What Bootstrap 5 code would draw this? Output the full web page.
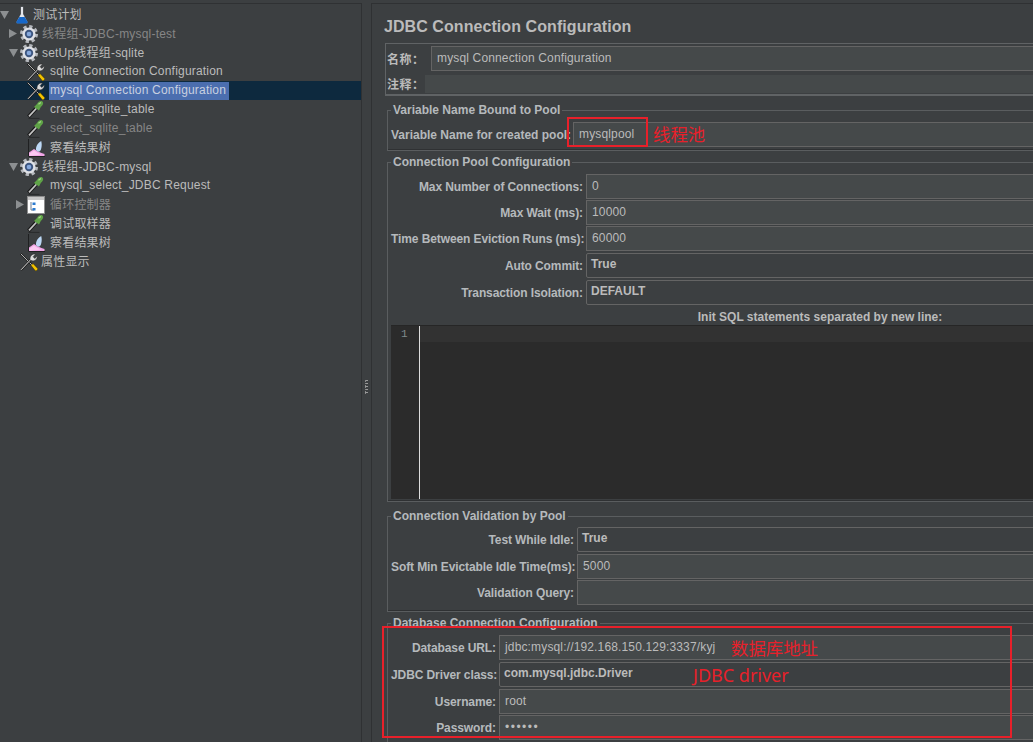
<!DOCTYPE html>
<html lang="zh">
<head>
<meta charset="utf-8">
<title>JDBC Connection Configuration</title>
<link href="https://cdn.jsdelivr.net/npm/bootstrap@5.3.0/dist/css/bootstrap.min.css" rel="stylesheet">
<style>
html,body{height:742px;overflow:hidden;}
body{background:#3c3f41;color:#bbb;font:12px/14px "Liberation Sans","Noto Sans CJK SC",sans-serif;position:relative;}
.shell{height:742px;padding-top:3px;}
.treepane{width:362px;flex:none;border-top:1px solid #2f3133;padding-top:1px;border-right:1px solid #2f3133;}
.tree-row{height:19px;white-space:nowrap;}
.lv0{padding-left:0;}.lv1{padding-left:9px;}.lv2{padding-left:16px;}
.tree-arrow{width:11px;flex:none;display:flex;justify-content:flex-start;}
.tree-icon{width:18px;height:18px;flex:none;margin:0 3px 0 0;}
.lv0 .tree-icon{width:16px;margin:0 2px 0 3px;}
.lv2 .tree-icon{margin-right:4px;}
.tree-label{padding:0 2px 0 1px;height:18px;line-height:18px;color:#bbb;letter-spacing:.2px;}
.tree-label.lat{line-height:16px;}
.tree-label.tight{margin-left:-1px;}
.dim .tree-label{color:#868686;}
.chosen{background:#0d293e;}
.chosen .tree-label{background:#4b6eaf;color:#c8d0e0;width:180px;}
.splitter{width:10px;flex:none;border-right:1px solid #2f3133;display:flex;align-items:center;justify-content:center;padding-top:29px;}
.grip{width:3px;height:14px;background:repeating-linear-gradient(#9a9a9a 0 1px,#3c3f41 1px 3px);border-left:1px dotted #888;}
.editpane{flex:1;min-width:0;overflow:hidden;border-top:1px solid #2f3133;padding:0 0 0 13px;}
.editinner{width:900px;}
.pagetitle{font-size:16px;font-weight:700;line-height:20px;margin:13px 0 6px -1px;color:#bbb;letter-spacing:.07px;}
.namebox{border:1px solid #606365;border-bottom-width:2px;border-right:0;height:53px;padding:2px 0 0 0;margin-right:-10px;}
.flabel{font-weight:700;font-family:"Noto Sans CJK SC",sans-serif;line-height:16px;}
.namebox .flabel{width:45px;padding-left:1px;flex:none;letter-spacing:.04em;}
.namebox .cmtlabel{width:39px;}
.fld{height:25px;background:#45494a;border:1px solid #646464;flex:1;padding:0 5px;line-height:23px;color:#bbb;min-width:0;letter-spacing:.15px;}
.fld.dots{letter-spacing:1.5px;}
.combo{height:25px;background:#3c3f41;border:1px solid #646464;border-radius:2px;flex:1;padding:0 4px;line-height:21px;font-weight:700;color:#bbb;}
.cmt{height:18px;background:#45494a;flex:1;}
fieldset.grp{border:1px solid #5a5d5f;border-right:0;margin:0 0 0 2px;padding:0 0 2px 3px;min-width:0;box-shadow:inset 0 -1px 0 #2f3133;}
legend.cap{float:none;width:auto;font-size:12px;line-height:14px;font-weight:700;margin:0;padding:0 2px;color:#b5b9bc;}
.frow{display:flex;gap:3px;align-items:center;margin-bottom:1px;}
.frow:has(.combo){margin-top:2px;margin-bottom:2px;}
.flbl{flex:none;text-align:right;font-weight:700;color:#b5b9bc;white-space:nowrap;letter-spacing:-.1px;}
.g1{margin-top:7px!important;padding-top:5px!important;}
.g2{margin-top:4px!important;padding-top:5px!important;padding-bottom:1px!important;}
.g3{margin-top:7px!important;padding-top:2px!important;padding-bottom:5px!important;}
.g4{margin-top:4px!important;padding-top:5px!important;}
.g1 .flbl{width:179px;letter-spacing:0;}
.g2 .flbl{width:192px;}
.g3 .flbl{width:183px;}
.g4 .flbl{width:105px;}
.sqlcap{text-align:center;font-weight:700;width:858px;line-height:14px;margin:5px 0 1px;}
.sqlbox{background:#2b2b2b;height:174px;display:flex;border-top:1px solid #262626;margin-bottom:1px;}
.gutter{width:29px;flex:none;color:#7f8a8d;font-family:"Liberation Mono",monospace;font-size:11px;padding:1px 0 0 10px;line-height:14px;background:#2b2b2b;border-right:1px solid #ddd;}
.sqlarea{flex:1;}
.curline{height:16px;background:#323232;}
.ann{position:absolute;border:2px solid #e8202a;pointer-events:none;}
.antext{position:absolute;color:#e8202a;font:17.4px/20px "Noto Sans","Noto Sans CJK SC",sans-serif;white-space:nowrap;}
.antext.wide{font-size:18px;}
</style>
</head>
<body>
<svg width="0" height="0" class="position-absolute">
<defs>
<symbol id="i-gear" viewBox="0 0 18 18">
<circle cx="9" cy="9" r="7.400" fill="none" stroke="#b4b7bc" stroke-width="3.200" stroke-dasharray="3.200 2.610"/>
<circle cx="9" cy="9" r="6.600" fill="#dfe1e6"/>
<circle cx="9" cy="9" r="4.200" fill="#3d5680"/>
<circle cx="9" cy="9" r="2.300" fill="#86a8dc"/>
</symbol>
<symbol id="i-flask" viewBox="0 0 16 18">
<path d="M6.500 .5h3v7.500l4 7.500c.5 1-.2 2-1.200 2H3.700c-1 0-1.700-1-1.200-2l4-7.500z" fill="#e4e7ec" stroke="#24272a" stroke-width=".6"/>
<path d="M5.400 11h5.200l2.900 4.500c.5 1-.2 2-1.200 2H3.700c-1 0-1.700-1-1.200-2z" fill="#1667c8"/>
</symbol>
<symbol id="i-tools" viewBox="0 0 18 18">
<path d="M.5 .5l12 12" stroke="#1c1c1c" stroke-width="1.800" fill="none"/>
<path d="M.8 .8l12 12" stroke="#dcdcdc" stroke-width=".8" fill="none"/>
<path d="M11 12.500l2-2 4.700 4.900c.6 1-1.400 3-2.400 2.400z" fill="#f2c200" stroke="#2f2800" stroke-width=".5"/>
<path d="M1 17l10-10.500" stroke="#1f1f1f" stroke-width="2.200" fill="none"/>
<path d="M1 16.800l10-10.500" stroke="#e6e6e6" stroke-width="1" fill="none"/>
<path d="M10.300 7.500c-1.100-2.800.8-6.300 3.800-6.600l1.400.1-2.300 2.700 1.500 1.700 2.500-2.300c.5 3.100-2.800 5.900-5.900 4.400z" fill="#dcdcdc" stroke="#2c2c2c" stroke-width=".6"/>
</symbol>
<symbol id="i-pipette" viewBox="0 0 18 18">
<path d="M1.500 17.500h11" stroke="#2a2c2d" stroke-width="1.200"/>
<path d="M1.500 15.800l8-8.800" stroke="#161616" stroke-width="3.600"/>
<path d="M2 15.400l7.500-8.200" stroke="#c4c4c4" stroke-width="1.700"/>
<path d="M7 6l3-3c1.200-2.200 3.700-3.700 5.400-2.500 1.600 1.200.5 3.800-1.500 5.300L12 9.500z" fill="#5fa347"/>
<path d="M11.500 3.200l2.400-1.800" stroke="#a7d68c" stroke-width="1.200"/>
</symbol>
<symbol id="i-graph" viewBox="0 0 18 18">
<path d="M1.500 0v17.500" stroke="#1f2021" stroke-width="1"/>
<path d="M2 17.500h16" stroke="#1f2021" stroke-width="1"/>
<path d="M2 17V13.500l5-3.500 4 2.500 3.500 1.500 3 1v2z" fill="#f0a4e6"/>
<path d="M2.500 17v-2.500l4.500-3 3 2 4 2z" fill="#fbc9f3"/>
<path d="M9 10.500c-.3-3.500 2.300-7 5.200-8.500 1 3 .5 9-1.700 10.500-1.500.5-3-.200-3.500-2z" fill="#bcd8f5"/>
</symbol>
<symbol id="i-loop" viewBox="0 0 18 18">
<rect x=".5" y=".5" width="17" height="17" fill="#fff" stroke="#8d8d8d"/>
<rect x="1" y="1" width="16" height="3" fill="#c8c8c8"/>
<path d="M4 6v8h3" stroke="#6f7d8f" fill="none"/>
<rect x="5.500" y="6.500" width="3" height="2.500" fill="#2a7ad0"/>
<rect x="5.500" y="12" width="3" height="2.500" fill="#2a7ad0"/>
</symbol>
</defs>
</svg>

<div class="shell d-flex">
  <div class="treepane">
    <div class="tree-row d-flex align-items-center lv0"><span class="tree-arrow"><svg width="9" height="8"><path d="M0 0h9L4.500 8z" fill="#8c8f91"/></svg></span><svg class="tree-icon"><use href="#i-flask"/></svg><span class="tree-label">测试计划</span></div>
    <div class="tree-row d-flex align-items-center lv1 dim"><span class="tree-arrow"><svg width="8" height="9"><path d="M0 0v9l8-4.500z" fill="#8c8f91"/></svg></span><svg class="tree-icon"><use href="#i-gear"/></svg><span class="tree-label">线程组-JDBC-mysql-test</span></div>
    <div class="tree-row d-flex align-items-center lv1"><span class="tree-arrow"><svg width="9" height="8"><path d="M0 0h9L4.500 8z" fill="#8c8f91"/></svg></span><svg class="tree-icon"><use href="#i-gear"/></svg><span class="tree-label">setUp线程组-sqlite</span></div>
    <div class="tree-row d-flex align-items-center lv2"><span class="tree-arrow"></span><svg class="tree-icon"><use href="#i-tools"/></svg><span class="tree-label lat">sqlite Connection Configuration</span></div>
    <div class="tree-row d-flex align-items-center lv2 chosen"><span class="tree-arrow"></span><svg class="tree-icon"><use href="#i-tools"/></svg><span class="tree-label lat">mysql Connection Configuration</span></div>
    <div class="tree-row d-flex align-items-center lv2"><span class="tree-arrow"></span><svg class="tree-icon"><use href="#i-pipette"/></svg><span class="tree-label lat">create_sqlite_table</span></div>
    <div class="tree-row d-flex align-items-center lv2 dim"><span class="tree-arrow"></span><svg class="tree-icon"><use href="#i-pipette"/></svg><span class="tree-label lat">select_sqlite_table</span></div>
    <div class="tree-row d-flex align-items-center lv2"><span class="tree-arrow"></span><svg class="tree-icon"><use href="#i-graph"/></svg><span class="tree-label">察看结果树</span></div>
    <div class="tree-row d-flex align-items-center lv1"><span class="tree-arrow"><svg width="9" height="8"><path d="M0 0h9L4.500 8z" fill="#8c8f91"/></svg></span><svg class="tree-icon"><use href="#i-gear"/></svg><span class="tree-label">线程组-JDBC-mysql</span></div>
    <div class="tree-row d-flex align-items-center lv2"><span class="tree-arrow"></span><svg class="tree-icon"><use href="#i-pipette"/></svg><span class="tree-label lat">mysql_select_JDBC Request</span></div>
    <div class="tree-row d-flex align-items-center lv2 dim"><span class="tree-arrow"><svg width="8" height="9"><path d="M0 0v9l8-4.500z" fill="#8c8f91"/></svg></span><svg class="tree-icon"><use href="#i-loop"/></svg><span class="tree-label">循环控制器</span></div>
    <div class="tree-row d-flex align-items-center lv2"><span class="tree-arrow"></span><svg class="tree-icon"><use href="#i-pipette"/></svg><span class="tree-label">调试取样器</span></div>
    <div class="tree-row d-flex align-items-center lv2"><span class="tree-arrow"></span><svg class="tree-icon"><use href="#i-graph"/></svg><span class="tree-label">察看结果树</span></div>
    <div class="tree-row d-flex align-items-center lv1"><span class="tree-arrow"></span><svg class="tree-icon"><use href="#i-tools"/></svg><span class="tree-label tight">属性显示</span></div>
  </div>
  <div class="splitter"><span class="grip"></span></div>
  <div class="editpane">
    <div class="editinner">
      <div class="pagetitle">JDBC Connection Configuration</div>
      <div class="namebox">
        <div class="d-flex align-items-center mb-1"><span class="flabel">名称：</span><div class="fld">mysql Connection Configuration</div></div>
        <div class="d-flex align-items-center"><span class="flabel cmtlabel">注释：</span><div class="cmt"></div></div>
      </div>
      <fieldset class="grp g1">
        <legend class="cap">Variable Name Bound to Pool</legend>
        <div class="frow"><span class="flbl">Variable Name for created pool:</span><div class="fld">mysqlpool</div></div>
      </fieldset>
      <fieldset class="grp g2">
        <legend class="cap">Connection Pool Configuration</legend>
        <div class="frow"><span class="flbl">Max Number of Connections:</span><div class="fld">0</div></div>
        <div class="frow"><span class="flbl">Max Wait (ms):</span><div class="fld">10000</div></div>
        <div class="frow"><span class="flbl">Time Between Eviction Runs (ms):</span><div class="fld">60000</div></div>
        <div class="frow"><span class="flbl">Auto Commit:</span><div class="combo">True</div></div>
        <div class="frow"><span class="flbl">Transaction Isolation:</span><div class="combo">DEFAULT</div></div>
        <div class="sqlcap">Init SQL statements separated by new line:</div>
        <div class="sqlbox"><div class="gutter">1</div><div class="sqlarea"><div class="curline"></div></div></div>
      </fieldset>
      <fieldset class="grp g3">
        <legend class="cap">Connection Validation by Pool</legend>
        <div class="frow"><span class="flbl">Test While Idle:</span><div class="combo">True</div></div>
        <div class="frow"><span class="flbl">Soft Min Evictable Idle Time(ms):</span><div class="fld">5000</div></div>
        <div class="frow"><span class="flbl">Validation Query:</span><div class="fld"></div></div>
      </fieldset>
      <fieldset class="grp g4">
        <legend class="cap">Database Connection Configuration</legend>
        <div class="frow"><span class="flbl">Database URL:</span><div class="fld">jdbc:mysql://192.168.150.129:3337/kyj</div></div>
        <div class="frow"><span class="flbl">JDBC Driver class:</span><div class="combo">com.mysql.jdbc.Driver</div></div>
        <div class="frow"><span class="flbl">Username:</span><div class="fld">root</div></div>
        <div class="frow"><span class="flbl">Password:</span><div class="fld dots">••••••</div></div>
      </fieldset>
    </div>
  </div>
</div>
<div class="ann" style="left:567px;top:117px;width:81px;height:30px"></div>
<div class="antext" style="left:653px;top:124px">线程池</div>
<div class="ann" style="left:382px;top:626px;width:630px;height:112px"></div>
<div class="antext" style="left:731px;top:638px">数据库地址</div>
<div class="antext wide" style="left:693px;top:665px">JDBC driver</div>
</body>
</html>
